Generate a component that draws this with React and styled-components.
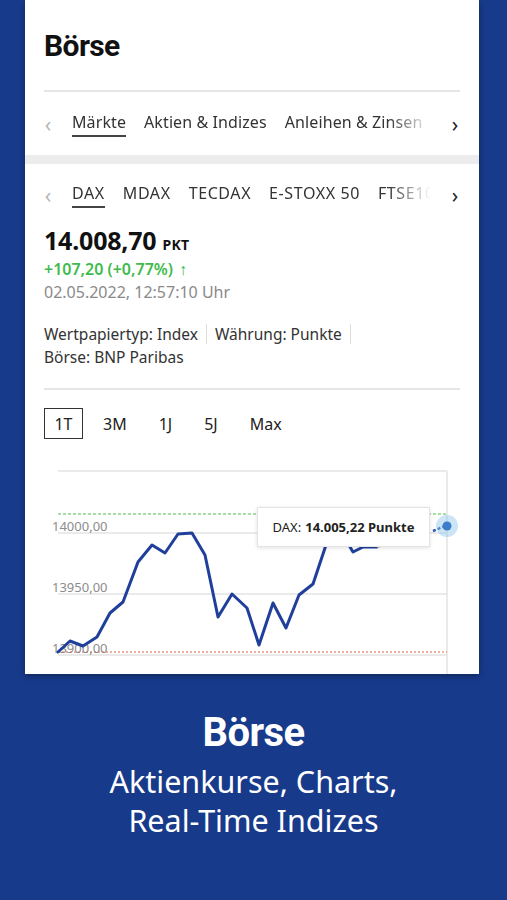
import React from "react";
import styled, { createGlobalStyle } from "styled-components";

const GlobalStyle = createGlobalStyle`
  html, body {
    margin: 0;
    padding: 0;
    background: #183a8b;
    font-family: "Noto Sans", "Open Sans", sans-serif;
  }
`;

const Page = styled.div`
  width: 507px;
  height: 900px;
  background: #183a8b;
  display: flex;
  flex-direction: column;
  overflow: hidden;
`;

const Card = styled.div`
  width: 454px;
  height: 674px;
  margin-left: 25px;
  background: #fff;
  box-shadow: 0 2px 6px rgba(0, 0, 0, 0.35);
  display: flex;
  flex-direction: column;
  flex-shrink: 0;
`;

const Section = styled.div`
  padding: 0 19px;
  display: flex;
  flex-direction: column;
`;

const Title = styled.h1`
  margin: 0;
  height: 90px;
  display: flex;
  align-items: center;
  font-family: Roboto, "Noto Sans", sans-serif;
  font-weight: 700;
  font-size: 30px;
  letter-spacing: -0.6px;
  color: #111;
`;

const Divider = styled.div`
  height: 2px;
  background: #e6e6e6;
`;

const TabRow = styled.div`
  height: ${(p) => p.h}px;
  display: flex;
  align-items: center;
  gap: 19px;
`;

const Arrow = styled.span`
  width: 10px;
  font-size: 21px;
  color: ${(p) => (p.faded ? "#b5b5b5" : "#222")};
  display: flex;
  align-items: center;
  justify-content: center;
  margin-left: ${(p) => (p.faded ? "-1px" : "0")};
`;

const Tabs = styled.div`
  flex: 1;
  display: flex;
  gap: 18px;
  overflow: hidden;
  white-space: nowrap;
  mask-image: linear-gradient(to right, #000 88%, transparent 100%);
`;

const Tab = styled.span`
  font-size: 16px;
  color: #333;
  padding-bottom: 2px;
  border-bottom: 2px solid ${(p) => (p.active ? "#444" : "transparent")};
  letter-spacing: ${(p) => (p.caps ? "0.6px" : "0.1px")};
`;

const Strip = styled.div`
  height: 11px;
  background: #ececec;
`;

const PriceRow = styled.div`
  display: flex;
  align-items: baseline;
  gap: 6px;
  height: 28px;
  color: #111;
`;

const Price = styled.span`
  font-size: 25px;
  font-weight: 700;
  letter-spacing: -0.2px;
  line-height: 28px;
`;

const Unit = styled.span`
  font-size: 14px;
  font-weight: 700;
  letter-spacing: 0.3px;
`;

const Change = styled.div`
  margin-top: 5px;
  font-size: 16px;
  line-height: 20px;
  font-weight: 600;
  color: #3fbb4d;
  span {
    font-weight: 400;
    margin-left: 6px;
  }
`;

const DateLine = styled.div`
  margin-top: 3px;
  font-size: 16px;
  line-height: 20px;
  color: #8a8a8a;
`;

const InfoBlock = styled.div`
  margin-top: 22px;
  display: flex;
  flex-wrap: wrap;
  row-gap: 3px;
  font-size: 15.5px;
  color: #333;
  padding-bottom: 21px;
  border-bottom: 2px solid #e6e6e6;
`;

const Info = styled.span`
  padding-right: 8px;
  margin-right: 8px;
  border-right: ${(p) => (p.sep ? "1px solid #ddd" : "none")};
  line-height: 20px;
`;

const RangeRow = styled.div`
  margin-top: 18px;
  display: flex;
  align-items: center;
`;

const RangeBtn = styled.span`
  height: 31px;
  min-width: ${(p) => (p.active ? "39px" : "auto")};
  box-sizing: border-box;
  border: ${(p) => (p.active ? "1.5px solid #333" : "none")};
  display: flex;
  align-items: center;
  justify-content: center;
  font-size: 16px;
  color: #222;
  margin-right: ${(p) => p.mr}px;
`;

const ChartWrap = styled.div`
  position: relative;
  margin-top: 19px;
  height: 216px;
`;

const Tooltip = styled.div`
  position: absolute;
  left: 213px;
  top: 49px;
  width: 173px;
  height: 40px;
  box-sizing: border-box;
  background: #fff;
  border: 1px solid #e4e4e4;
  box-shadow: 0 1px 4px rgba(0, 0, 0, 0.12);
  display: flex;
  align-items: center;
  justify-content: center;
  font-size: 13px;
  color: #222;
  white-space: nowrap;
  b {
    margin-left: 4px;
    font-weight: 700;
  }
`;

const Footer = styled.div`
  flex: 1;
  display: flex;
  flex-direction: column;
  align-items: center;
  color: #fff;
  padding-top: 34px;
`;

const FooterTitle = styled.div`
  font-family: Roboto, "Noto Sans", sans-serif;
  font-weight: 700;
  font-size: 40px;
  letter-spacing: -0.6px;
  line-height: 50px;
`;

const FooterText = styled.div`
  margin-top: 4px;
  font-size: 30.5px;
  line-height: 39px;
  text-align: center;
  font-weight: 400;
`;

const points = [
  [14, 194], [26, 183], [39, 188], [53, 179], [66, 155], [79, 144], [94, 104],
  [108, 87], [121, 95], [134, 76], [148, 75], [161, 97], [174, 159], [188, 136],
  [203, 150], [215, 187], [229, 145], [242, 170], [255, 137], [269, 126],
  [282, 87], [296, 72], [309, 94], [319, 89], [333, 89],
];

function Chart() {
  const d = points.map((p, i) => (i ? "L" : "M") + p[0] + " " + p[1]).join(" ");
  return (
    <svg width="416" height="216" viewBox="0 0 416 216">
      <line x1="14" y1="13" x2="403" y2="13" stroke="#e3e3e3" strokeWidth="1.5" />
      <line x1="403" y1="13" x2="403" y2="216" stroke="#e3e3e3" strokeWidth="1.5" />
      <line x1="14" y1="75" x2="403" y2="75" stroke="#e3e3e3" strokeWidth="1.5" />
      <line x1="14" y1="136" x2="403" y2="136" stroke="#e3e3e3" strokeWidth="1.5" />
      <line x1="14" y1="197" x2="403" y2="197" stroke="#e3e3e3" strokeWidth="1.5" />
      <line x1="14" y1="56" x2="403" y2="56" stroke="#4cbf4c" strokeWidth="1" strokeDasharray="3 2" />
      <line x1="14" y1="194" x2="403" y2="194" stroke="#e0623a" strokeWidth="1" strokeDasharray="2 2" />
      <g fontFamily="'Noto Sans', sans-serif" fontSize="13" fill="#8c8c8c">
        <text x="8" y="73">14000,00</text>
        <text x="8" y="134">13950,00</text>
        <text x="8" y="195">13900,00</text>
      </g>
      <path d={d} fill="none" stroke="#1f3f9a" strokeWidth="3" strokeLinejoin="round" strokeLinecap="round" />
      <path d="M333 89 L345 86" stroke="#b0b0b0" strokeWidth="2" />
      <path d="M389 73 L401 68" stroke="#2a56b0" strokeWidth="2.5" strokeDasharray="3 2" />
      <circle cx="403" cy="68" r="11" fill="#8cc3ea" opacity="0.45" />
      <circle cx="403" cy="68" r="4.5" fill="#3b7dc8" />
    </svg>
  );
}

export default function App() {
  return (
    <Page>
      <GlobalStyle />
      <Card>
        <Section>
          <Title>Börse</Title>
          <Divider />
          <TabRow h={63}>
            <Arrow faded>‹</Arrow>
            <Tabs>
              <Tab active>Märkte</Tab>
              <Tab>Aktien &amp; Indizes</Tab>
              <Tab>Anleihen &amp; Zinsen</Tab>
            </Tabs>
            <Arrow>›</Arrow>
          </TabRow>
        </Section>
        <Strip />
        <Section>
          <TabRow h={62}>
            <Arrow faded>‹</Arrow>
            <Tabs>
              <Tab active caps>DAX</Tab>
              <Tab caps>MDAX</Tab>
              <Tab caps>TECDAX</Tab>
              <Tab caps>E-STOXX 50</Tab>
              <Tab caps>FTSE100</Tab>
            </Tabs>
            <Arrow>›</Arrow>
          </TabRow>
          <PriceRow>
            <Price>14.008,70</Price>
            <Unit>PKT</Unit>
          </PriceRow>
          <Change>
            +107,20 (+0,77%)<span>↑</span>
          </Change>
          <DateLine>02.05.2022, 12:57:10 Uhr</DateLine>
          <InfoBlock>
            <Info sep>Wertpapiertyp: Index</Info>
            <Info sep>Währung: Punkte</Info>
            <Info>Börse: BNP Paribas</Info>
          </InfoBlock>
          <RangeRow>
            <RangeBtn active mr={20}>1T</RangeBtn>
            <RangeBtn mr={32}>3M</RangeBtn>
            <RangeBtn mr={32}>1J</RangeBtn>
            <RangeBtn mr={32}>5J</RangeBtn>
            <RangeBtn>Max</RangeBtn>
          </RangeRow>
          <ChartWrap>
            <Chart />
            <Tooltip>
              DAX:<b>14.005,22 Punkte</b>
            </Tooltip>
          </ChartWrap>
        </Section>
      </Card>
      <Footer>
        <FooterTitle>Börse</FooterTitle>
        <FooterText>
          Aktienkurse, Charts,
          <br />
          Real-Time Indizes
        </FooterText>
      </Footer>
    </Page>
  );
}
